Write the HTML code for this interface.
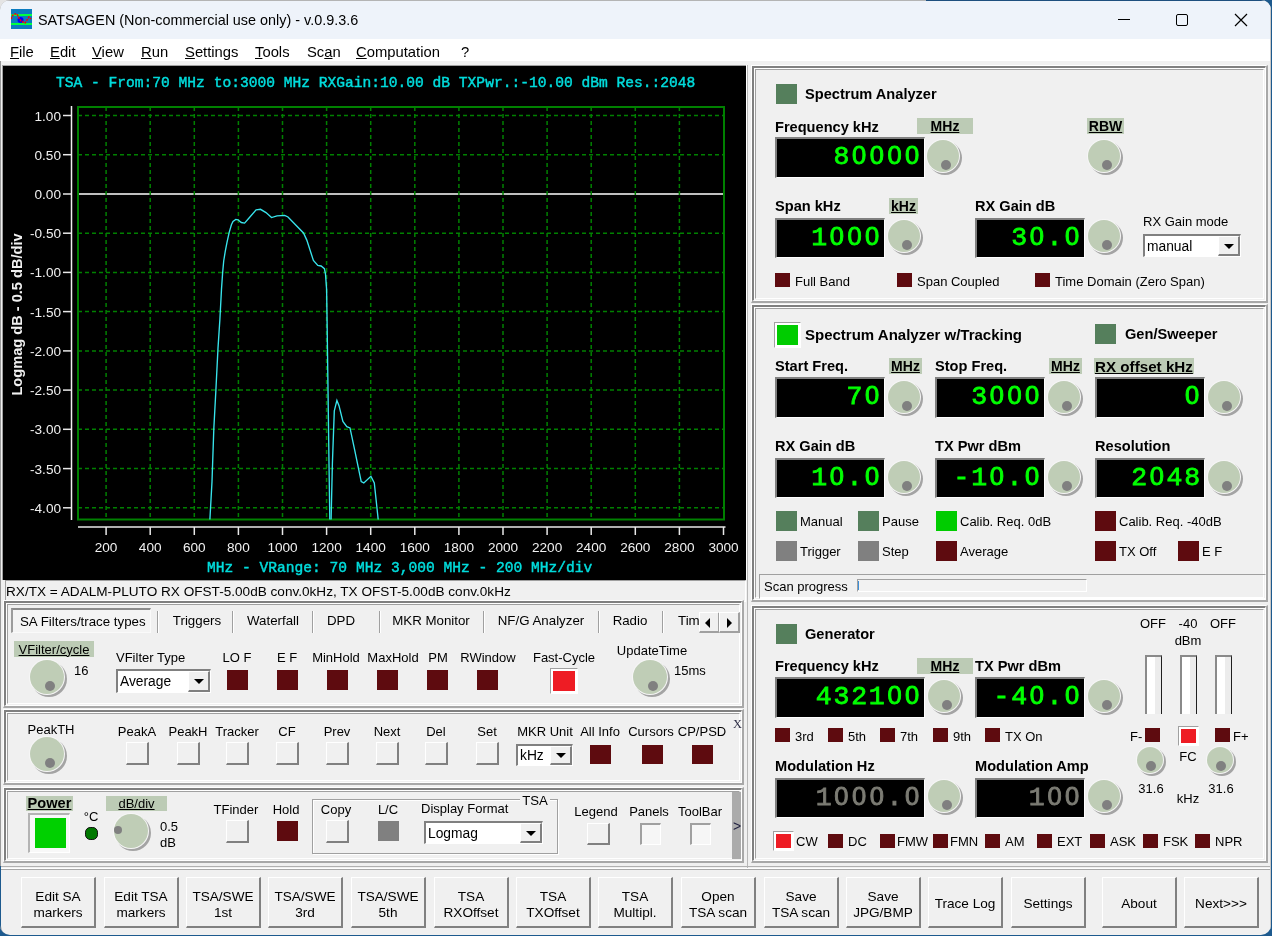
<!DOCTYPE html><html><head><meta charset="utf-8"><style>
html,body{margin:0;padding:0;width:1272px;height:936px;overflow:hidden;background:#1d5a8e}
#win{position:absolute;left:0;top:0;will-change:transform;width:1271px;height:935px;background:#f0f0f0;border-radius:10px;overflow:hidden;box-shadow:inset 1px 1px 0 #9a9a9a}
</style></head><body><div style="position:absolute;left:0;top:0;width:14px;height:14px;background:#e4e4e4"></div><div id="win"><div style="position:absolute;left:0px;top:0px;width:1271px;height:39px;background:#eef3fa"></div>
<svg style="position:absolute;left:11px;top:9px" width="21" height="21" viewBox="0 0 21 21"><rect x="0" y="0" width="21" height="20" fill="#0a7bc0"/><rect x="0" y="5" width="21" height="2" fill="#00ff40"/><rect x="0" y="14" width="21" height="2" fill="#00ff40"/><circle cx="9.5" cy="11" r="3" fill="#0000ff"/><polyline points="0,10 2,6 4,5 6,5 8,9 10,12 12,13 14,14 16,11 18,8 20,10" fill="none" stroke="#ff0000" stroke-width="1.5" stroke-dasharray="2,1"/></svg>
<div style="position:absolute;left:38px;top:11.5px;height:17px;line-height:17px;font:normal 14.4px 'Liberation Sans',sans-serif;color:#000;white-space:pre;">SATSAGEN (Non-commercial use only) - v.0.9.3.6</div>
<div style="position:absolute;left:1118px;top:19px;width:12px;height:1px;background:#000"></div>
<div style="position:absolute;left:1176px;top:14px;width:12px;height:12px;box-sizing:border-box;border:1.3px solid #000;border-radius:2px"></div>
<svg style="position:absolute;left:1234px;top:13px" width="14" height="14" viewBox="0 0 14 14"><path d="M1 1 L13 13 M13 1 L1 13" stroke="#000" stroke-width="1.2"/></svg>
<div style="position:absolute;left:0px;top:39px;width:1271px;height:22px;background:#fff"></div>
<div style="position:absolute;left:10px;top:43.5px;height:18px;line-height:18px;font:normal 14.8px 'Liberation Sans',sans-serif;color:#000;white-space:pre;"><u>F</u>ile</div>
<div style="position:absolute;left:50px;top:43.5px;height:18px;line-height:18px;font:normal 14.8px 'Liberation Sans',sans-serif;color:#000;white-space:pre;"><u>E</u>dit</div>
<div style="position:absolute;left:92px;top:43.5px;height:18px;line-height:18px;font:normal 14.8px 'Liberation Sans',sans-serif;color:#000;white-space:pre;"><u>V</u>iew</div>
<div style="position:absolute;left:141px;top:43.5px;height:18px;line-height:18px;font:normal 14.8px 'Liberation Sans',sans-serif;color:#000;white-space:pre;"><u>R</u>un</div>
<div style="position:absolute;left:185px;top:43.5px;height:18px;line-height:18px;font:normal 14.8px 'Liberation Sans',sans-serif;color:#000;white-space:pre;"><u>S</u>ettings</div>
<div style="position:absolute;left:255px;top:43.5px;height:18px;line-height:18px;font:normal 14.8px 'Liberation Sans',sans-serif;color:#000;white-space:pre;"><u>T</u>ools</div>
<div style="position:absolute;left:307px;top:43.5px;height:18px;line-height:18px;font:normal 14.8px 'Liberation Sans',sans-serif;color:#000;white-space:pre;">Sc<u>a</u>n</div>
<div style="position:absolute;left:356px;top:43.5px;height:18px;line-height:18px;font:normal 14.8px 'Liberation Sans',sans-serif;color:#000;white-space:pre;"><u>C</u>omputation</div>
<div style="position:absolute;left:461px;top:43.5px;height:18px;line-height:18px;font:normal 14.8px 'Liberation Sans',sans-serif;color:#000;white-space:pre;">?</div>
<div style="position:absolute;left:2px;top:65px;width:744px;height:1px;background:#a0a0a0"></div>
<div style="position:absolute;left:2px;top:65px;width:1px;height:515px;background:#a0a0a0"></div>
<svg style="position:absolute;left:3px;top:66px" width="743" height="514" viewBox="3 66 743 514"><rect x="3" y="66" width="743" height="514" fill="#000"/><text x="56" y="87" fill="#00dcdc" font-family="Liberation Mono" font-weight="normal" stroke="#00dcdc" stroke-width="0.45" font-size="14.6">TSA - From:70 MHz to:3000 MHz RXGain:10.00 dB TXPwr.:-10.00 dBm Res.:2048</text><line x1="63" y1="115.5" x2="71" y2="115.5" stroke="#e8e8e8" stroke-width="1.5"/><text x="61" y="120.5" text-anchor="end" fill="#f0f0f0" font-family="Liberation Sans" font-size="13.6">1.00</text><line x1="78" y1="115.5" x2="724" y2="115.5" stroke="#008000" stroke-width="1.5" stroke-dasharray="4,3"/><line x1="63" y1="154.7" x2="71" y2="154.7" stroke="#e8e8e8" stroke-width="1.5"/><text x="61" y="159.7" text-anchor="end" fill="#f0f0f0" font-family="Liberation Sans" font-size="13.6">0.50</text><line x1="78" y1="154.7" x2="724" y2="154.7" stroke="#008000" stroke-width="1.5" stroke-dasharray="4,3"/><line x1="63" y1="194.0" x2="71" y2="194.0" stroke="#e8e8e8" stroke-width="1.5"/><text x="61" y="199.0" text-anchor="end" fill="#f0f0f0" font-family="Liberation Sans" font-size="13.6">0.00</text><line x1="78" y1="194.0" x2="724" y2="194.0" stroke="#ffffff" stroke-width="1.5"/><line x1="63" y1="233.2" x2="71" y2="233.2" stroke="#e8e8e8" stroke-width="1.5"/><text x="61" y="238.2" text-anchor="end" fill="#f0f0f0" font-family="Liberation Sans" font-size="13.6">-0.50</text><line x1="78" y1="233.2" x2="724" y2="233.2" stroke="#008000" stroke-width="1.5" stroke-dasharray="4,3"/><line x1="63" y1="272.4" x2="71" y2="272.4" stroke="#e8e8e8" stroke-width="1.5"/><text x="61" y="277.4" text-anchor="end" fill="#f0f0f0" font-family="Liberation Sans" font-size="13.6">-1.00</text><line x1="78" y1="272.4" x2="724" y2="272.4" stroke="#008000" stroke-width="1.5" stroke-dasharray="4,3"/><line x1="63" y1="311.6" x2="71" y2="311.6" stroke="#e8e8e8" stroke-width="1.5"/><text x="61" y="316.6" text-anchor="end" fill="#f0f0f0" font-family="Liberation Sans" font-size="13.6">-1.50</text><line x1="78" y1="311.6" x2="724" y2="311.6" stroke="#008000" stroke-width="1.5" stroke-dasharray="4,3"/><line x1="63" y1="350.9" x2="71" y2="350.9" stroke="#e8e8e8" stroke-width="1.5"/><text x="61" y="355.9" text-anchor="end" fill="#f0f0f0" font-family="Liberation Sans" font-size="13.6">-2.00</text><line x1="78" y1="350.9" x2="724" y2="350.9" stroke="#008000" stroke-width="1.5" stroke-dasharray="4,3"/><line x1="63" y1="390.1" x2="71" y2="390.1" stroke="#e8e8e8" stroke-width="1.5"/><text x="61" y="395.1" text-anchor="end" fill="#f0f0f0" font-family="Liberation Sans" font-size="13.6">-2.50</text><line x1="78" y1="390.1" x2="724" y2="390.1" stroke="#008000" stroke-width="1.5" stroke-dasharray="4,3"/><line x1="63" y1="429.3" x2="71" y2="429.3" stroke="#e8e8e8" stroke-width="1.5"/><text x="61" y="434.3" text-anchor="end" fill="#f0f0f0" font-family="Liberation Sans" font-size="13.6">-3.00</text><line x1="78" y1="429.3" x2="724" y2="429.3" stroke="#008000" stroke-width="1.5" stroke-dasharray="4,3"/><line x1="63" y1="468.6" x2="71" y2="468.6" stroke="#e8e8e8" stroke-width="1.5"/><text x="61" y="473.6" text-anchor="end" fill="#f0f0f0" font-family="Liberation Sans" font-size="13.6">-3.50</text><line x1="78" y1="468.6" x2="724" y2="468.6" stroke="#008000" stroke-width="1.5" stroke-dasharray="4,3"/><line x1="63" y1="507.8" x2="71" y2="507.8" stroke="#e8e8e8" stroke-width="1.5"/><text x="61" y="512.8" text-anchor="end" fill="#f0f0f0" font-family="Liberation Sans" font-size="13.6">-4.00</text><line x1="78" y1="507.8" x2="724" y2="507.8" stroke="#008000" stroke-width="1.5" stroke-dasharray="4,3"/><line x1="71.5" y1="106" x2="71.5" y2="520" stroke="#f0f0f0" stroke-width="1.5"/><line x1="106.1" y1="107" x2="106.1" y2="519.5" stroke="#008000" stroke-width="1.5" stroke-dasharray="4,3"/><line x1="106.1" y1="527" x2="106.1" y2="535" stroke="#e8e8e8" stroke-width="1.5"/><text x="106.1" y="552" text-anchor="middle" fill="#f0f0f0" font-family="Liberation Sans" font-size="13.6">200</text><line x1="150.2" y1="107" x2="150.2" y2="519.5" stroke="#008000" stroke-width="1.5" stroke-dasharray="4,3"/><line x1="150.2" y1="527" x2="150.2" y2="535" stroke="#e8e8e8" stroke-width="1.5"/><text x="150.2" y="552" text-anchor="middle" fill="#f0f0f0" font-family="Liberation Sans" font-size="13.6">400</text><line x1="194.3" y1="107" x2="194.3" y2="519.5" stroke="#008000" stroke-width="1.5" stroke-dasharray="4,3"/><line x1="194.3" y1="527" x2="194.3" y2="535" stroke="#e8e8e8" stroke-width="1.5"/><text x="194.3" y="552" text-anchor="middle" fill="#f0f0f0" font-family="Liberation Sans" font-size="13.6">600</text><line x1="238.4" y1="107" x2="238.4" y2="519.5" stroke="#008000" stroke-width="1.5" stroke-dasharray="4,3"/><line x1="238.4" y1="527" x2="238.4" y2="535" stroke="#e8e8e8" stroke-width="1.5"/><text x="238.4" y="552" text-anchor="middle" fill="#f0f0f0" font-family="Liberation Sans" font-size="13.6">800</text><line x1="282.5" y1="107" x2="282.5" y2="519.5" stroke="#008000" stroke-width="1.5" stroke-dasharray="4,3"/><line x1="282.5" y1="527" x2="282.5" y2="535" stroke="#e8e8e8" stroke-width="1.5"/><text x="282.5" y="552" text-anchor="middle" fill="#f0f0f0" font-family="Liberation Sans" font-size="13.6">1000</text><line x1="326.6" y1="107" x2="326.6" y2="519.5" stroke="#008000" stroke-width="1.5" stroke-dasharray="4,3"/><line x1="326.6" y1="527" x2="326.6" y2="535" stroke="#e8e8e8" stroke-width="1.5"/><text x="326.6" y="552" text-anchor="middle" fill="#f0f0f0" font-family="Liberation Sans" font-size="13.6">1200</text><line x1="370.7" y1="107" x2="370.7" y2="519.5" stroke="#008000" stroke-width="1.5" stroke-dasharray="4,3"/><line x1="370.7" y1="527" x2="370.7" y2="535" stroke="#e8e8e8" stroke-width="1.5"/><text x="370.7" y="552" text-anchor="middle" fill="#f0f0f0" font-family="Liberation Sans" font-size="13.6">1400</text><line x1="414.8" y1="107" x2="414.8" y2="519.5" stroke="#008000" stroke-width="1.5" stroke-dasharray="4,3"/><line x1="414.8" y1="527" x2="414.8" y2="535" stroke="#e8e8e8" stroke-width="1.5"/><text x="414.8" y="552" text-anchor="middle" fill="#f0f0f0" font-family="Liberation Sans" font-size="13.6">1600</text><line x1="458.9" y1="107" x2="458.9" y2="519.5" stroke="#008000" stroke-width="1.5" stroke-dasharray="4,3"/><line x1="458.9" y1="527" x2="458.9" y2="535" stroke="#e8e8e8" stroke-width="1.5"/><text x="458.9" y="552" text-anchor="middle" fill="#f0f0f0" font-family="Liberation Sans" font-size="13.6">1800</text><line x1="503.0" y1="107" x2="503.0" y2="519.5" stroke="#008000" stroke-width="1.5" stroke-dasharray="4,3"/><line x1="503.0" y1="527" x2="503.0" y2="535" stroke="#e8e8e8" stroke-width="1.5"/><text x="503.0" y="552" text-anchor="middle" fill="#f0f0f0" font-family="Liberation Sans" font-size="13.6">2000</text><line x1="547.1" y1="107" x2="547.1" y2="519.5" stroke="#008000" stroke-width="1.5" stroke-dasharray="4,3"/><line x1="547.1" y1="527" x2="547.1" y2="535" stroke="#e8e8e8" stroke-width="1.5"/><text x="547.1" y="552" text-anchor="middle" fill="#f0f0f0" font-family="Liberation Sans" font-size="13.6">2200</text><line x1="591.2" y1="107" x2="591.2" y2="519.5" stroke="#008000" stroke-width="1.5" stroke-dasharray="4,3"/><line x1="591.2" y1="527" x2="591.2" y2="535" stroke="#e8e8e8" stroke-width="1.5"/><text x="591.2" y="552" text-anchor="middle" fill="#f0f0f0" font-family="Liberation Sans" font-size="13.6">2400</text><line x1="635.3" y1="107" x2="635.3" y2="519.5" stroke="#008000" stroke-width="1.5" stroke-dasharray="4,3"/><line x1="635.3" y1="527" x2="635.3" y2="535" stroke="#e8e8e8" stroke-width="1.5"/><text x="635.3" y="552" text-anchor="middle" fill="#f0f0f0" font-family="Liberation Sans" font-size="13.6">2600</text><line x1="679.4" y1="107" x2="679.4" y2="519.5" stroke="#008000" stroke-width="1.5" stroke-dasharray="4,3"/><line x1="679.4" y1="527" x2="679.4" y2="535" stroke="#e8e8e8" stroke-width="1.5"/><text x="679.4" y="552" text-anchor="middle" fill="#f0f0f0" font-family="Liberation Sans" font-size="13.6">2800</text><line x1="723.5" y1="527" x2="723.5" y2="535" stroke="#e8e8e8" stroke-width="1.5"/><text x="723.5" y="552" text-anchor="middle" fill="#f0f0f0" font-family="Liberation Sans" font-size="13.6">3000</text><rect x="78" y="107" width="646" height="412.5" fill="none" stroke="#008000" stroke-width="2"/><line x1="78" y1="527" x2="725.5" y2="527" stroke="#e8e8e8" stroke-width="1.5"/><polyline fill="none" stroke="#38e4ec" stroke-width="1.35" points="209.9,519.5 212,481.6 213.8,429.2 215.9,390 218,348.1 219.9,319.3 221.5,289.1 222.6,273.1 223.7,261 225.3,251.1 227,242.3 229.2,232.4 231.4,224.7 233,221.4 235.8,219.4 238,219.8 241.3,222.5 244.6,223.1 248.4,218.7 256.1,209.9 260.5,209.3 266,212.6 271.5,217.6 277,215.9 284.7,215.4 288,217 303.5,233 306.8,240.1 313.4,260.5 317.8,265.4 321.1,266 324.4,268.7 325.5,274.2 326.6,289.1 327.2,329.7 329,463.2 329.8,519.5"/><polyline fill="none" stroke="#38e4ec" stroke-width="1.35" points="331.1,519.5 332.4,463.2 334.3,410.9 336.9,400.4 339,405.7 342.9,421.4 346.8,426.6 350,427.9 354.7,450.2 361.2,481.6 363.8,482.9 370.9,476.3 374.3,482.9 378.2,519.5"/><text x="207" y="572" fill="#00dcdc" font-family="Liberation Mono" font-weight="normal" stroke="#00dcdc" stroke-width="0.45" font-size="14.6">MHz - VRange: 70 MHz 3,000 MHz - 200 MHz/div</text><text transform="translate(22,314.5) rotate(-90)" text-anchor="middle" fill="#f0f0f0" font-family="Liberation Sans" font-weight="bold" font-size="14.6">Logmag dB - 0.5 dB/div</text></svg>
<div style="position:absolute;left:5px;top:580px;width:741px;height:22px;box-sizing:border-box;border-top:1px solid #a0a0a0;border-left:1px solid #a0a0a0;border-bottom:1px solid #fff;border-right:1px solid #fff;background:#f0f0f0"></div>
<div style="position:absolute;left:6px;top:583.5px;height:16px;line-height:16px;font:normal 13.6px 'Liberation Sans',sans-serif;color:#000;white-space:pre;">RX/TX = ADALM-PLUTO RX OFST-5.00dB conv.0kHz, TX OFST-5.00dB conv.0kHz</div>
<div style="position:absolute;left:746px;top:61px;width:6px;height:810px;background:#f0f0f0"></div>
<div style="position:absolute;left:746px;top:65px;width:1px;height:515px;background:#fff"></div>
<div style="position:absolute;left:747px;top:65px;width:1px;height:805px;background:#b8b8b8"></div>
<div style="position:absolute;left:751px;top:65px;width:517px;height:238px;box-sizing:border-box;border-top:1px solid #fff;border-left:1px solid #fff;border-right:2px solid #a8a8a8;border-bottom:2px solid #a8a8a8"></div>
<div style="position:absolute;left:752px;top:66px;width:514px;height:235px;box-sizing:border-box;border-top:2px solid #808080;border-left:2px solid #808080;border-right:1px solid #fff;border-bottom:1px solid #fff"></div>
<div style="position:absolute;left:754px;top:68px;width:511px;height:232px;box-sizing:border-box;border-top:1px solid #fff;border-left:1px solid #fff;border-right:0;border-bottom:0"></div>
<div style="position:absolute;left:755px;top:69px;width:509px;height:230px;box-sizing:border-box;border-top:1px solid #a0a0a0;border-left:1px solid #a0a0a0;border-right:1px solid #fff;border-bottom:1px solid #fff"></div>
<div style="position:absolute;left:776px;top:84px;width:21px;height:20px;background:#557f5c"></div>
<div style="position:absolute;left:805px;top:85.5px;height:18px;line-height:18px;font:bold 14.6px 'Liberation Sans',sans-serif;color:#000;white-space:pre;">Spectrum Analyzer</div>
<div style="position:absolute;left:775px;top:118.5px;height:18px;line-height:18px;font:bold 14.6px 'Liberation Sans',sans-serif;color:#000;white-space:pre;">Frequency kHz</div>
<div style="position:absolute;left:917px;top:118px;width:56px;height:16px;background:#bccbb5"></div>
<div style="position:absolute;left:795.0px;width:300px;text-align:center;top:118.0px;height:17px;line-height:17px;font:bold 14px 'Liberation Sans',sans-serif;color:#000;white-space:pre;text-decoration:underline">MHz</div>
<div style="position:absolute;left:775px;top:137px;width:150px;height:41px;background:#000;border-top:2px solid #808080;border-left:2px solid #808080;border-bottom:1px solid #fff;border-right:1px solid #fff;box-sizing:border-box"></div>
<div style="position:absolute;left:775px;top:141px;width:146px;height:41px;line-height:41px;text-align:right;font:normal 26.5px 'Liberation Mono',monospace;-webkit-text-stroke:0.8px #00ff00;color:#00ff00;white-space:pre"><span style="display:inline-block;width:17.7px;text-align:center">8</span><span style="display:inline-block;width:17.7px;text-align:center;font:normal 25.5px 'Liberation Sans',sans-serif;-webkit-text-stroke:0.9px #00ff00">0</span><span style="display:inline-block;width:17.7px;text-align:center;font:normal 25.5px 'Liberation Sans',sans-serif;-webkit-text-stroke:0.9px #00ff00">0</span><span style="display:inline-block;width:17.7px;text-align:center;font:normal 25.5px 'Liberation Sans',sans-serif;-webkit-text-stroke:0.9px #00ff00">0</span><span style="display:inline-block;width:17.7px;text-align:center;font:normal 25.5px 'Liberation Sans',sans-serif;-webkit-text-stroke:0.9px #00ff00">0</span></div>
<div style="position:absolute;left:927.4px;top:140.4px;width:32px;height:32px;border-radius:50%;background:#bfcdb6;box-shadow:0 0 0 1px #f6f6f6, 2px 2px 0 1px #a4a4a4"></div>
<div style="position:absolute;left:941.4px;top:160.4px;width:10px;height:10px;border-radius:50%;background:#808080"></div>
<div style="position:absolute;left:1087px;top:118px;width:37px;height:16px;background:#bccbb5"></div>
<div style="position:absolute;left:955.5px;width:300px;text-align:center;top:118.0px;height:17px;line-height:17px;font:bold 14px 'Liberation Sans',sans-serif;color:#000;white-space:pre;text-decoration:underline">RBW</div>
<div style="position:absolute;left:1088.4px;top:140.4px;width:32px;height:32px;border-radius:50%;background:#bfcdb6;box-shadow:0 0 0 1px #f6f6f6, 2px 2px 0 1px #a4a4a4"></div>
<div style="position:absolute;left:1102.4px;top:160.4px;width:10px;height:10px;border-radius:50%;background:#808080"></div>
<div style="position:absolute;left:775px;top:197.5px;height:18px;line-height:18px;font:bold 14.6px 'Liberation Sans',sans-serif;color:#000;white-space:pre;">Span kHz</div>
<div style="position:absolute;left:889px;top:198px;width:29px;height:16px;background:#bccbb5"></div>
<div style="position:absolute;left:753.5px;width:300px;text-align:center;top:198.0px;height:17px;line-height:17px;font:bold 14px 'Liberation Sans',sans-serif;color:#000;white-space:pre;text-decoration:underline">kHz</div>
<div style="position:absolute;left:775px;top:218px;width:110px;height:40px;background:#000;border-top:2px solid #808080;border-left:2px solid #808080;border-bottom:1px solid #fff;border-right:1px solid #fff;box-sizing:border-box"></div>
<div style="position:absolute;left:775px;top:222px;width:106px;height:40px;line-height:40px;text-align:right;font:normal 26.5px 'Liberation Mono',monospace;-webkit-text-stroke:0.8px #00ff00;color:#00ff00;white-space:pre"><span style="display:inline-block;width:17.7px;text-align:center">1</span><span style="display:inline-block;width:17.7px;text-align:center;font:normal 25.5px 'Liberation Sans',sans-serif;-webkit-text-stroke:0.9px #00ff00">0</span><span style="display:inline-block;width:17.7px;text-align:center;font:normal 25.5px 'Liberation Sans',sans-serif;-webkit-text-stroke:0.9px #00ff00">0</span><span style="display:inline-block;width:17.7px;text-align:center;font:normal 25.5px 'Liberation Sans',sans-serif;-webkit-text-stroke:0.9px #00ff00">0</span></div>
<div style="position:absolute;left:888.4px;top:220.4px;width:32px;height:32px;border-radius:50%;background:#bfcdb6;box-shadow:0 0 0 1px #f6f6f6, 2px 2px 0 1px #a4a4a4"></div>
<div style="position:absolute;left:902.4px;top:240.4px;width:10px;height:10px;border-radius:50%;background:#808080"></div>
<div style="position:absolute;left:975px;top:197.5px;height:18px;line-height:18px;font:bold 14.6px 'Liberation Sans',sans-serif;color:#000;white-space:pre;">RX Gain dB</div>
<div style="position:absolute;left:975px;top:218px;width:110px;height:40px;background:#000;border-top:2px solid #808080;border-left:2px solid #808080;border-bottom:1px solid #fff;border-right:1px solid #fff;box-sizing:border-box"></div>
<div style="position:absolute;left:975px;top:222px;width:106px;height:40px;line-height:40px;text-align:right;font:normal 26.5px 'Liberation Mono',monospace;-webkit-text-stroke:0.8px #00ff00;color:#00ff00;white-space:pre"><span style="display:inline-block;width:17.7px;text-align:center">3</span><span style="display:inline-block;width:17.7px;text-align:center;font:normal 25.5px 'Liberation Sans',sans-serif;-webkit-text-stroke:0.9px #00ff00">0</span><span style="display:inline-block;width:17.7px;text-align:center">.</span><span style="display:inline-block;width:17.7px;text-align:center;font:normal 25.5px 'Liberation Sans',sans-serif;-webkit-text-stroke:0.9px #00ff00">0</span></div>
<div style="position:absolute;left:1088.4px;top:220.4px;width:32px;height:32px;border-radius:50%;background:#bfcdb6;box-shadow:0 0 0 1px #f6f6f6, 2px 2px 0 1px #a4a4a4"></div>
<div style="position:absolute;left:1102.4px;top:240.4px;width:10px;height:10px;border-radius:50%;background:#808080"></div>
<div style="position:absolute;left:1143px;top:214.0px;height:16px;line-height:16px;font:normal 13px 'Liberation Sans',sans-serif;color:#000;white-space:pre;">RX Gain mode</div>
<div style="position:absolute;left:1143px;top:234px;width:98px;height:23px;box-sizing:border-box;border-top:2px solid #808080;border-left:2px solid #808080;border-bottom:1px solid #fff;border-right:1px solid #fff;background:#fff"></div>
<div style="position:absolute;left:1147px;top:238.5px;height:17px;line-height:17px;font:normal 13.8px 'Liberation Sans',sans-serif;color:#000;white-space:pre;">manual</div>
<div style="position:absolute;left:1218px;top:236px;width:22px;height:20px;box-sizing:border-box;border-top:1px solid #fff;border-left:1px solid #fff;border-right:2px solid #808080;border-bottom:2px solid #808080;background:#f0f0f0"></div>
<div style="position:absolute;left:1224px;top:243.5px;width:0;height:0;border-left:5px solid transparent;border-right:5px solid transparent;border-top:5px solid #000"></div>
<div style="position:absolute;left:775px;top:273px;width:15px;height:14px;background:#5e0b0f"></div>
<div style="position:absolute;left:795px;top:273.5px;height:16px;line-height:16px;font:normal 13px 'Liberation Sans',sans-serif;color:#000;white-space:pre;">Full Band</div>
<div style="position:absolute;left:897px;top:273px;width:15px;height:14px;background:#5e0b0f"></div>
<div style="position:absolute;left:917px;top:273.5px;height:16px;line-height:16px;font:normal 13px 'Liberation Sans',sans-serif;color:#000;white-space:pre;">Span Coupled</div>
<div style="position:absolute;left:1035px;top:273px;width:15px;height:14px;background:#5e0b0f"></div>
<div style="position:absolute;left:1055px;top:273.5px;height:16px;line-height:16px;font:normal 13px 'Liberation Sans',sans-serif;color:#000;white-space:pre;">Time Domain (Zero Span)</div>
<div style="position:absolute;left:751px;top:304px;width:517px;height:298px;box-sizing:border-box;border-top:1px solid #fff;border-left:1px solid #fff;border-right:2px solid #a8a8a8;border-bottom:2px solid #a8a8a8"></div>
<div style="position:absolute;left:752px;top:305px;width:514px;height:295px;box-sizing:border-box;border-top:2px solid #808080;border-left:2px solid #808080;border-right:1px solid #fff;border-bottom:1px solid #fff"></div>
<div style="position:absolute;left:754px;top:307px;width:511px;height:292px;box-sizing:border-box;border-top:1px solid #fff;border-left:1px solid #fff;border-right:0;border-bottom:0"></div>
<div style="position:absolute;left:755px;top:308px;width:509px;height:290px;box-sizing:border-box;border-top:1px solid #a0a0a0;border-left:1px solid #a0a0a0;border-right:1px solid #fff;border-bottom:1px solid #fff"></div>
<div style="position:absolute;left:774px;top:322px;width:25px;height:24px;border-top:1px solid #a0a0a0;border-left:1px solid #a0a0a0;border-bottom:1px solid #fff;border-right:1px solid #fff;background:#fff"></div>
<div style="position:absolute;left:777px;top:325px;width:21px;height:20px;background:#00cc00"></div>
<div style="position:absolute;left:805px;top:325.5px;height:18px;line-height:18px;font:bold 15px 'Liberation Sans',sans-serif;color:#000;white-space:pre;">Spectrum Analyzer w/Tracking</div>
<div style="position:absolute;left:1095px;top:324px;width:21px;height:20px;background:#557f5c"></div>
<div style="position:absolute;left:1125px;top:325.5px;height:18px;line-height:18px;font:bold 14.6px 'Liberation Sans',sans-serif;color:#000;white-space:pre;">Gen/Sweeper</div>
<div style="position:absolute;left:775px;top:357.5px;height:18px;line-height:18px;font:bold 14.6px 'Liberation Sans',sans-serif;color:#000;white-space:pre;">Start Freq.</div>
<div style="position:absolute;left:889px;top:358px;width:33px;height:16px;background:#bccbb5"></div>
<div style="position:absolute;left:755.5px;width:300px;text-align:center;top:358.0px;height:17px;line-height:17px;font:bold 14px 'Liberation Sans',sans-serif;color:#000;white-space:pre;text-decoration:underline">MHz</div>
<div style="position:absolute;left:775px;top:377px;width:110px;height:41px;background:#000;border-top:2px solid #808080;border-left:2px solid #808080;border-bottom:1px solid #fff;border-right:1px solid #fff;box-sizing:border-box"></div>
<div style="position:absolute;left:775px;top:381px;width:106px;height:41px;line-height:41px;text-align:right;font:normal 26.5px 'Liberation Mono',monospace;-webkit-text-stroke:0.8px #00ff00;color:#00ff00;white-space:pre"><span style="display:inline-block;width:17.7px;text-align:center">7</span><span style="display:inline-block;width:17.7px;text-align:center;font:normal 25.5px 'Liberation Sans',sans-serif;-webkit-text-stroke:0.9px #00ff00">0</span></div>
<div style="position:absolute;left:888.4px;top:381.4px;width:32px;height:32px;border-radius:50%;background:#bfcdb6;box-shadow:0 0 0 1px #f6f6f6, 2px 2px 0 1px #a4a4a4"></div>
<div style="position:absolute;left:902.4px;top:401.4px;width:10px;height:10px;border-radius:50%;background:#808080"></div>
<div style="position:absolute;left:935px;top:357.5px;height:18px;line-height:18px;font:bold 14.6px 'Liberation Sans',sans-serif;color:#000;white-space:pre;">Stop Freq.</div>
<div style="position:absolute;left:1049px;top:358px;width:33px;height:16px;background:#bccbb5"></div>
<div style="position:absolute;left:915.5px;width:300px;text-align:center;top:358.0px;height:17px;line-height:17px;font:bold 14px 'Liberation Sans',sans-serif;color:#000;white-space:pre;text-decoration:underline">MHz</div>
<div style="position:absolute;left:935px;top:377px;width:110px;height:41px;background:#000;border-top:2px solid #808080;border-left:2px solid #808080;border-bottom:1px solid #fff;border-right:1px solid #fff;box-sizing:border-box"></div>
<div style="position:absolute;left:935px;top:381px;width:106px;height:41px;line-height:41px;text-align:right;font:normal 26.5px 'Liberation Mono',monospace;-webkit-text-stroke:0.8px #00ff00;color:#00ff00;white-space:pre"><span style="display:inline-block;width:17.7px;text-align:center">3</span><span style="display:inline-block;width:17.7px;text-align:center;font:normal 25.5px 'Liberation Sans',sans-serif;-webkit-text-stroke:0.9px #00ff00">0</span><span style="display:inline-block;width:17.7px;text-align:center;font:normal 25.5px 'Liberation Sans',sans-serif;-webkit-text-stroke:0.9px #00ff00">0</span><span style="display:inline-block;width:17.7px;text-align:center;font:normal 25.5px 'Liberation Sans',sans-serif;-webkit-text-stroke:0.9px #00ff00">0</span></div>
<div style="position:absolute;left:1048.4px;top:381.4px;width:32px;height:32px;border-radius:50%;background:#bfcdb6;box-shadow:0 0 0 1px #f6f6f6, 2px 2px 0 1px #a4a4a4"></div>
<div style="position:absolute;left:1062.4px;top:401.4px;width:10px;height:10px;border-radius:50%;background:#808080"></div>
<div style="position:absolute;left:1094px;top:358px;width:100px;height:16px;background:#bccbb5"></div>
<div style="position:absolute;left:1095px;top:357.5px;height:18px;line-height:18px;font:bold 15.2px 'Liberation Sans',sans-serif;color:#000;white-space:pre;text-decoration:underline">RX offset kHz</div>
<div style="position:absolute;left:1095px;top:377px;width:110px;height:41px;background:#000;border-top:2px solid #808080;border-left:2px solid #808080;border-bottom:1px solid #fff;border-right:1px solid #fff;box-sizing:border-box"></div>
<div style="position:absolute;left:1095px;top:381px;width:106px;height:41px;line-height:41px;text-align:right;font:normal 26.5px 'Liberation Mono',monospace;-webkit-text-stroke:0.8px #00ff00;color:#00ff00;white-space:pre"><span style="display:inline-block;width:17.7px;text-align:center;font:normal 25.5px 'Liberation Sans',sans-serif;-webkit-text-stroke:0.9px #00ff00">0</span></div>
<div style="position:absolute;left:1208.4px;top:381.4px;width:32px;height:32px;border-radius:50%;background:#bfcdb6;box-shadow:0 0 0 1px #f6f6f6, 2px 2px 0 1px #a4a4a4"></div>
<div style="position:absolute;left:1222.4px;top:401.4px;width:10px;height:10px;border-radius:50%;background:#808080"></div>
<div style="position:absolute;left:775px;top:437.5px;height:18px;line-height:18px;font:bold 14.6px 'Liberation Sans',sans-serif;color:#000;white-space:pre;">RX Gain dB</div>
<div style="position:absolute;left:775px;top:458px;width:110px;height:40px;background:#000;border-top:2px solid #808080;border-left:2px solid #808080;border-bottom:1px solid #fff;border-right:1px solid #fff;box-sizing:border-box"></div>
<div style="position:absolute;left:775px;top:462px;width:106px;height:40px;line-height:40px;text-align:right;font:normal 26.5px 'Liberation Mono',monospace;-webkit-text-stroke:0.8px #00ff00;color:#00ff00;white-space:pre"><span style="display:inline-block;width:17.7px;text-align:center">1</span><span style="display:inline-block;width:17.7px;text-align:center;font:normal 25.5px 'Liberation Sans',sans-serif;-webkit-text-stroke:0.9px #00ff00">0</span><span style="display:inline-block;width:17.7px;text-align:center">.</span><span style="display:inline-block;width:17.7px;text-align:center;font:normal 25.5px 'Liberation Sans',sans-serif;-webkit-text-stroke:0.9px #00ff00">0</span></div>
<div style="position:absolute;left:888.4px;top:461.4px;width:32px;height:32px;border-radius:50%;background:#bfcdb6;box-shadow:0 0 0 1px #f6f6f6, 2px 2px 0 1px #a4a4a4"></div>
<div style="position:absolute;left:902.4px;top:481.4px;width:10px;height:10px;border-radius:50%;background:#808080"></div>
<div style="position:absolute;left:935px;top:437.5px;height:18px;line-height:18px;font:bold 14.6px 'Liberation Sans',sans-serif;color:#000;white-space:pre;">TX Pwr dBm</div>
<div style="position:absolute;left:935px;top:458px;width:110px;height:40px;background:#000;border-top:2px solid #808080;border-left:2px solid #808080;border-bottom:1px solid #fff;border-right:1px solid #fff;box-sizing:border-box"></div>
<div style="position:absolute;left:935px;top:462px;width:106px;height:40px;line-height:40px;text-align:right;font:normal 26.5px 'Liberation Mono',monospace;-webkit-text-stroke:0.8px #00ff00;color:#00ff00;white-space:pre"><span style="display:inline-block;width:17.7px;text-align:center">-</span><span style="display:inline-block;width:17.7px;text-align:center">1</span><span style="display:inline-block;width:17.7px;text-align:center;font:normal 25.5px 'Liberation Sans',sans-serif;-webkit-text-stroke:0.9px #00ff00">0</span><span style="display:inline-block;width:17.7px;text-align:center">.</span><span style="display:inline-block;width:17.7px;text-align:center;font:normal 25.5px 'Liberation Sans',sans-serif;-webkit-text-stroke:0.9px #00ff00">0</span></div>
<div style="position:absolute;left:1048.4px;top:461.4px;width:32px;height:32px;border-radius:50%;background:#bfcdb6;box-shadow:0 0 0 1px #f6f6f6, 2px 2px 0 1px #a4a4a4"></div>
<div style="position:absolute;left:1062.4px;top:481.4px;width:10px;height:10px;border-radius:50%;background:#808080"></div>
<div style="position:absolute;left:1095px;top:437.5px;height:18px;line-height:18px;font:bold 14.6px 'Liberation Sans',sans-serif;color:#000;white-space:pre;">Resolution</div>
<div style="position:absolute;left:1095px;top:458px;width:110px;height:40px;background:#000;border-top:2px solid #808080;border-left:2px solid #808080;border-bottom:1px solid #fff;border-right:1px solid #fff;box-sizing:border-box"></div>
<div style="position:absolute;left:1095px;top:462px;width:106px;height:40px;line-height:40px;text-align:right;font:normal 26.5px 'Liberation Mono',monospace;-webkit-text-stroke:0.8px #00ff00;color:#00ff00;white-space:pre"><span style="display:inline-block;width:17.7px;text-align:center">2</span><span style="display:inline-block;width:17.7px;text-align:center;font:normal 25.5px 'Liberation Sans',sans-serif;-webkit-text-stroke:0.9px #00ff00">0</span><span style="display:inline-block;width:17.7px;text-align:center">4</span><span style="display:inline-block;width:17.7px;text-align:center">8</span></div>
<div style="position:absolute;left:1208.4px;top:461.4px;width:32px;height:32px;border-radius:50%;background:#bfcdb6;box-shadow:0 0 0 1px #f6f6f6, 2px 2px 0 1px #a4a4a4"></div>
<div style="position:absolute;left:1222.4px;top:481.4px;width:10px;height:10px;border-radius:50%;background:#808080"></div>
<div style="position:absolute;left:776px;top:511px;width:21px;height:20px;background:#557f5c"></div>
<div style="position:absolute;left:800px;top:513.5px;height:16px;line-height:16px;font:normal 13px 'Liberation Sans',sans-serif;color:#000;white-space:pre;">Manual</div>
<div style="position:absolute;left:858px;top:511px;width:21px;height:20px;background:#557f5c"></div>
<div style="position:absolute;left:882px;top:513.5px;height:16px;line-height:16px;font:normal 13px 'Liberation Sans',sans-serif;color:#000;white-space:pre;">Pause</div>
<div style="position:absolute;left:936px;top:511px;width:21px;height:20px;background:#00cc00"></div>
<div style="position:absolute;left:960px;top:513.5px;height:16px;line-height:16px;font:normal 13px 'Liberation Sans',sans-serif;color:#000;white-space:pre;">Calib. Req. 0dB</div>
<div style="position:absolute;left:1095px;top:511px;width:21px;height:20px;background:#5e0b0f"></div>
<div style="position:absolute;left:1119px;top:513.5px;height:16px;line-height:16px;font:normal 13px 'Liberation Sans',sans-serif;color:#000;white-space:pre;">Calib. Req. -40dB</div>
<div style="position:absolute;left:776px;top:541px;width:21px;height:20px;background:#808080"></div>
<div style="position:absolute;left:800px;top:543.5px;height:16px;line-height:16px;font:normal 13px 'Liberation Sans',sans-serif;color:#000;white-space:pre;">Trigger</div>
<div style="position:absolute;left:858px;top:541px;width:21px;height:20px;background:#808080"></div>
<div style="position:absolute;left:882px;top:543.5px;height:16px;line-height:16px;font:normal 13px 'Liberation Sans',sans-serif;color:#000;white-space:pre;">Step</div>
<div style="position:absolute;left:936px;top:541px;width:21px;height:20px;background:#5e0b0f"></div>
<div style="position:absolute;left:960px;top:543.5px;height:16px;line-height:16px;font:normal 13px 'Liberation Sans',sans-serif;color:#000;white-space:pre;">Average</div>
<div style="position:absolute;left:1095px;top:541px;width:21px;height:20px;background:#5e0b0f"></div>
<div style="position:absolute;left:1119px;top:543.5px;height:16px;line-height:16px;font:normal 13px 'Liberation Sans',sans-serif;color:#000;white-space:pre;">TX Off</div>
<div style="position:absolute;left:1178px;top:541px;width:21px;height:20px;background:#5e0b0f"></div>
<div style="position:absolute;left:1202px;top:543.5px;height:16px;line-height:16px;font:normal 13px 'Liberation Sans',sans-serif;color:#000;white-space:pre;">E F</div>
<div style="position:absolute;left:759px;top:574px;width:507px;height:25px;box-sizing:border-box;border-top:1px solid #a0a0a0;border-left:1px solid #a0a0a0;border-bottom:1px solid #fff;border-right:1px solid #fff"></div>
<div style="position:absolute;left:764px;top:579.0px;height:16px;line-height:16px;font:normal 13px 'Liberation Sans',sans-serif;color:#000;white-space:pre;">Scan progress</div>
<div style="position:absolute;left:857px;top:579px;width:230px;height:13px;box-sizing:border-box;border-top:1px solid #a0a0a0;border-left:1px solid #a0a0a0;border-bottom:1px solid #fff;border-right:1px solid #fff;background:#f2f2f2"></div>
<div style="position:absolute;left:858px;top:581px;width:1px;height:9px;background:#3c8fd8"></div>
<div style="position:absolute;left:751px;top:605px;width:517px;height:258px;box-sizing:border-box;border-top:1px solid #fff;border-left:1px solid #fff;border-right:2px solid #a8a8a8;border-bottom:2px solid #a8a8a8"></div>
<div style="position:absolute;left:752px;top:606px;width:514px;height:255px;box-sizing:border-box;border-top:2px solid #808080;border-left:2px solid #808080;border-right:1px solid #fff;border-bottom:1px solid #fff"></div>
<div style="position:absolute;left:754px;top:608px;width:511px;height:252px;box-sizing:border-box;border-top:1px solid #fff;border-left:1px solid #fff;border-right:0;border-bottom:0"></div>
<div style="position:absolute;left:755px;top:609px;width:509px;height:250px;box-sizing:border-box;border-top:1px solid #a0a0a0;border-left:1px solid #a0a0a0;border-right:1px solid #fff;border-bottom:1px solid #fff"></div>
<div style="position:absolute;left:776px;top:624px;width:21px;height:20px;background:#557f5c"></div>
<div style="position:absolute;left:805px;top:625.5px;height:18px;line-height:18px;font:bold 14.6px 'Liberation Sans',sans-serif;color:#000;white-space:pre;">Generator</div>
<div style="position:absolute;left:775px;top:657.5px;height:18px;line-height:18px;font:bold 14.6px 'Liberation Sans',sans-serif;color:#000;white-space:pre;">Frequency kHz</div>
<div style="position:absolute;left:917px;top:658px;width:56px;height:16px;background:#bccbb5"></div>
<div style="position:absolute;left:795.0px;width:300px;text-align:center;top:658.0px;height:17px;line-height:17px;font:bold 14px 'Liberation Sans',sans-serif;color:#000;white-space:pre;text-decoration:underline">MHz</div>
<div style="position:absolute;left:775px;top:677px;width:150px;height:41px;background:#000;border-top:2px solid #808080;border-left:2px solid #808080;border-bottom:1px solid #fff;border-right:1px solid #fff;box-sizing:border-box"></div>
<div style="position:absolute;left:775px;top:681px;width:146px;height:41px;line-height:41px;text-align:right;font:normal 26.5px 'Liberation Mono',monospace;-webkit-text-stroke:0.8px #00ff00;color:#00ff00;white-space:pre"><span style="display:inline-block;width:17.7px;text-align:center">4</span><span style="display:inline-block;width:17.7px;text-align:center">3</span><span style="display:inline-block;width:17.7px;text-align:center">2</span><span style="display:inline-block;width:17.7px;text-align:center">1</span><span style="display:inline-block;width:17.7px;text-align:center;font:normal 25.5px 'Liberation Sans',sans-serif;-webkit-text-stroke:0.9px #00ff00">0</span><span style="display:inline-block;width:17.7px;text-align:center;font:normal 25.5px 'Liberation Sans',sans-serif;-webkit-text-stroke:0.9px #00ff00">0</span></div>
<div style="position:absolute;left:928.4px;top:680.4px;width:32px;height:32px;border-radius:50%;background:#bfcdb6;box-shadow:0 0 0 1px #f6f6f6, 2px 2px 0 1px #a4a4a4"></div>
<div style="position:absolute;left:942.4px;top:700.4px;width:10px;height:10px;border-radius:50%;background:#808080"></div>
<div style="position:absolute;left:975px;top:657.5px;height:18px;line-height:18px;font:bold 14.6px 'Liberation Sans',sans-serif;color:#000;white-space:pre;">TX Pwr dBm</div>
<div style="position:absolute;left:975px;top:677px;width:110px;height:41px;background:#000;border-top:2px solid #808080;border-left:2px solid #808080;border-bottom:1px solid #fff;border-right:1px solid #fff;box-sizing:border-box"></div>
<div style="position:absolute;left:975px;top:681px;width:106px;height:41px;line-height:41px;text-align:right;font:normal 26.5px 'Liberation Mono',monospace;-webkit-text-stroke:0.8px #00ff00;color:#00ff00;white-space:pre"><span style="display:inline-block;width:17.7px;text-align:center">-</span><span style="display:inline-block;width:17.7px;text-align:center">4</span><span style="display:inline-block;width:17.7px;text-align:center;font:normal 25.5px 'Liberation Sans',sans-serif;-webkit-text-stroke:0.9px #00ff00">0</span><span style="display:inline-block;width:17.7px;text-align:center">.</span><span style="display:inline-block;width:17.7px;text-align:center;font:normal 25.5px 'Liberation Sans',sans-serif;-webkit-text-stroke:0.9px #00ff00">0</span></div>
<div style="position:absolute;left:1088.4px;top:680.4px;width:32px;height:32px;border-radius:50%;background:#bfcdb6;box-shadow:0 0 0 1px #f6f6f6, 2px 2px 0 1px #a4a4a4"></div>
<div style="position:absolute;left:1102.4px;top:700.4px;width:10px;height:10px;border-radius:50%;background:#808080"></div>
<div style="position:absolute;left:775px;top:728px;width:15px;height:14px;background:#5e0b0f"></div>
<div style="position:absolute;left:795px;top:728.5px;height:16px;line-height:16px;font:normal 13px 'Liberation Sans',sans-serif;color:#000;white-space:pre;">3rd</div>
<div style="position:absolute;left:828px;top:728px;width:15px;height:14px;background:#5e0b0f"></div>
<div style="position:absolute;left:848px;top:728.5px;height:16px;line-height:16px;font:normal 13px 'Liberation Sans',sans-serif;color:#000;white-space:pre;">5th</div>
<div style="position:absolute;left:880px;top:728px;width:15px;height:14px;background:#5e0b0f"></div>
<div style="position:absolute;left:900px;top:728.5px;height:16px;line-height:16px;font:normal 13px 'Liberation Sans',sans-serif;color:#000;white-space:pre;">7th</div>
<div style="position:absolute;left:933px;top:728px;width:15px;height:14px;background:#5e0b0f"></div>
<div style="position:absolute;left:953px;top:728.5px;height:16px;line-height:16px;font:normal 13px 'Liberation Sans',sans-serif;color:#000;white-space:pre;">9th</div>
<div style="position:absolute;left:985px;top:728px;width:15px;height:14px;background:#5e0b0f"></div>
<div style="position:absolute;left:1005px;top:728.5px;height:16px;line-height:16px;font:normal 13px 'Liberation Sans',sans-serif;color:#000;white-space:pre;">TX On</div>
<div style="position:absolute;left:775px;top:757.5px;height:18px;line-height:18px;font:bold 14.6px 'Liberation Sans',sans-serif;color:#000;white-space:pre;">Modulation Hz</div>
<div style="position:absolute;left:775px;top:778px;width:150px;height:40px;background:#000;border-top:2px solid #808080;border-left:2px solid #808080;border-bottom:1px solid #fff;border-right:1px solid #fff;box-sizing:border-box"></div>
<div style="position:absolute;left:775px;top:782px;width:146px;height:40px;line-height:40px;text-align:right;font:normal 26.5px 'Liberation Mono',monospace;-webkit-text-stroke:0.8px #7c7c74;color:#7c7c74;white-space:pre"><span style="display:inline-block;width:17.7px;text-align:center">1</span><span style="display:inline-block;width:17.7px;text-align:center;font:normal 25.5px 'Liberation Sans',sans-serif;-webkit-text-stroke:0.9px #7c7c74">0</span><span style="display:inline-block;width:17.7px;text-align:center;font:normal 25.5px 'Liberation Sans',sans-serif;-webkit-text-stroke:0.9px #7c7c74">0</span><span style="display:inline-block;width:17.7px;text-align:center;font:normal 25.5px 'Liberation Sans',sans-serif;-webkit-text-stroke:0.9px #7c7c74">0</span><span style="display:inline-block;width:17.7px;text-align:center">.</span><span style="display:inline-block;width:17.7px;text-align:center;font:normal 25.5px 'Liberation Sans',sans-serif;-webkit-text-stroke:0.9px #7c7c74">0</span></div>
<div style="position:absolute;left:928.4px;top:780.4px;width:32px;height:32px;border-radius:50%;background:#bfcdb6;box-shadow:0 0 0 1px #f6f6f6, 2px 2px 0 1px #a4a4a4"></div>
<div style="position:absolute;left:942.4px;top:800.4px;width:10px;height:10px;border-radius:50%;background:#808080"></div>
<div style="position:absolute;left:975px;top:757.5px;height:18px;line-height:18px;font:bold 14.6px 'Liberation Sans',sans-serif;color:#000;white-space:pre;">Modulation Amp</div>
<div style="position:absolute;left:975px;top:778px;width:110px;height:40px;background:#000;border-top:2px solid #808080;border-left:2px solid #808080;border-bottom:1px solid #fff;border-right:1px solid #fff;box-sizing:border-box"></div>
<div style="position:absolute;left:975px;top:782px;width:106px;height:40px;line-height:40px;text-align:right;font:normal 26.5px 'Liberation Mono',monospace;-webkit-text-stroke:0.8px #7c7c74;color:#7c7c74;white-space:pre"><span style="display:inline-block;width:17.7px;text-align:center">1</span><span style="display:inline-block;width:17.7px;text-align:center;font:normal 25.5px 'Liberation Sans',sans-serif;-webkit-text-stroke:0.9px #7c7c74">0</span><span style="display:inline-block;width:17.7px;text-align:center;font:normal 25.5px 'Liberation Sans',sans-serif;-webkit-text-stroke:0.9px #7c7c74">0</span></div>
<div style="position:absolute;left:1088.4px;top:780.4px;width:32px;height:32px;border-radius:50%;background:#bfcdb6;box-shadow:0 0 0 1px #f6f6f6, 2px 2px 0 1px #a4a4a4"></div>
<div style="position:absolute;left:1102.4px;top:800.4px;width:10px;height:10px;border-radius:50%;background:#808080"></div>
<div style="position:absolute;left:773px;top:831px;width:19px;height:18px;border-top:1px solid #a0a0a0;border-left:1px solid #a0a0a0;border-bottom:1px solid #fff;border-right:1px solid #fff;background:#fff"></div>
<div style="position:absolute;left:776px;top:834px;width:15px;height:14px;background:#ee1c24"></div>
<div style="position:absolute;left:796px;top:833.5px;height:16px;line-height:16px;font:normal 13px 'Liberation Sans',sans-serif;color:#000;white-space:pre;">CW</div>
<div style="position:absolute;left:828px;top:834px;width:15px;height:14px;background:#5e0b0f"></div>
<div style="position:absolute;left:848px;top:833.5px;height:16px;line-height:16px;font:normal 13px 'Liberation Sans',sans-serif;color:#000;white-space:pre;">DC</div>
<div style="position:absolute;left:880px;top:834px;width:15px;height:14px;background:#5e0b0f"></div>
<div style="position:absolute;left:897px;top:833.5px;height:16px;line-height:16px;font:normal 13px 'Liberation Sans',sans-serif;color:#000;white-space:pre;">FMW</div>
<div style="position:absolute;left:933px;top:834px;width:15px;height:14px;background:#5e0b0f"></div>
<div style="position:absolute;left:950px;top:833.5px;height:16px;line-height:16px;font:normal 13px 'Liberation Sans',sans-serif;color:#000;white-space:pre;">FMN</div>
<div style="position:absolute;left:985px;top:834px;width:15px;height:14px;background:#5e0b0f"></div>
<div style="position:absolute;left:1005px;top:833.5px;height:16px;line-height:16px;font:normal 13px 'Liberation Sans',sans-serif;color:#000;white-space:pre;">AM</div>
<div style="position:absolute;left:1037px;top:834px;width:15px;height:14px;background:#5e0b0f"></div>
<div style="position:absolute;left:1057px;top:833.5px;height:16px;line-height:16px;font:normal 13px 'Liberation Sans',sans-serif;color:#000;white-space:pre;">EXT</div>
<div style="position:absolute;left:1090px;top:834px;width:15px;height:14px;background:#5e0b0f"></div>
<div style="position:absolute;left:1110px;top:833.5px;height:16px;line-height:16px;font:normal 13px 'Liberation Sans',sans-serif;color:#000;white-space:pre;">ASK</div>
<div style="position:absolute;left:1143px;top:834px;width:15px;height:14px;background:#5e0b0f"></div>
<div style="position:absolute;left:1163px;top:833.5px;height:16px;line-height:16px;font:normal 13px 'Liberation Sans',sans-serif;color:#000;white-space:pre;">FSK</div>
<div style="position:absolute;left:1195px;top:834px;width:15px;height:14px;background:#5e0b0f"></div>
<div style="position:absolute;left:1215px;top:833.5px;height:16px;line-height:16px;font:normal 13px 'Liberation Sans',sans-serif;color:#000;white-space:pre;">NPR</div>
<div style="position:absolute;left:1003px;width:300px;text-align:center;top:615.5px;height:16px;line-height:16px;font:normal 13px 'Liberation Sans',sans-serif;color:#000;white-space:pre;">OFF</div>
<div style="position:absolute;left:1145px;top:655px;width:17px;height:59px;box-sizing:border-box;border-top:2px solid #8a8a8a;border-left:2px solid #8a8a8a;border-right:1px solid #202020;background:linear-gradient(to right,#fff 0,#fff 8px,#ececec 8px)"></div>
<div style="position:absolute;left:1038px;width:300px;text-align:center;top:615.5px;height:16px;line-height:16px;font:normal 13px 'Liberation Sans',sans-serif;color:#000;white-space:pre;">-40</div>
<div style="position:absolute;left:1180px;top:655px;width:17px;height:59px;box-sizing:border-box;border-top:2px solid #8a8a8a;border-left:2px solid #8a8a8a;border-right:1px solid #202020;background:linear-gradient(to right,#fff 0,#fff 8px,#ececec 8px)"></div>
<div style="position:absolute;left:1073px;width:300px;text-align:center;top:615.5px;height:16px;line-height:16px;font:normal 13px 'Liberation Sans',sans-serif;color:#000;white-space:pre;">OFF</div>
<div style="position:absolute;left:1215px;top:655px;width:17px;height:59px;box-sizing:border-box;border-top:2px solid #8a8a8a;border-left:2px solid #8a8a8a;border-right:1px solid #202020;background:linear-gradient(to right,#fff 0,#fff 8px,#ececec 8px)"></div>
<div style="position:absolute;left:1038px;width:300px;text-align:center;top:632.5px;height:16px;line-height:16px;font:normal 13px 'Liberation Sans',sans-serif;color:#000;white-space:pre;">dBm</div>
<div style="position:absolute;left:1130px;top:728.5px;height:16px;line-height:16px;font:normal 13px 'Liberation Sans',sans-serif;color:#000;white-space:pre;">F-</div>
<div style="position:absolute;left:1145px;top:728px;width:15px;height:14px;background:#5e0b0f"></div>
<div style="position:absolute;left:1178px;top:726px;width:19px;height:18px;border-top:1px solid #a0a0a0;border-left:1px solid #a0a0a0;border-bottom:1px solid #fff;border-right:1px solid #fff;background:#fff"></div>
<div style="position:absolute;left:1181px;top:729px;width:15px;height:14px;background:#ee1c24"></div>
<div style="position:absolute;left:1215px;top:728px;width:15px;height:14px;background:#5e0b0f"></div>
<div style="position:absolute;left:1233px;top:728.5px;height:16px;line-height:16px;font:normal 13px 'Liberation Sans',sans-serif;color:#000;white-space:pre;">F+</div>
<div style="position:absolute;left:1038px;width:300px;text-align:center;top:748.5px;height:16px;line-height:16px;font:normal 13px 'Liberation Sans',sans-serif;color:#000;white-space:pre;">FC</div>
<div style="position:absolute;left:1137.4px;top:747.4px;width:26px;height:26px;border-radius:50%;background:#bfcdb6;box-shadow:0 0 0 1px #f6f6f6, 2px 2px 0 1px #a4a4a4"></div>
<div style="position:absolute;left:1146.4px;top:761.4px;width:10px;height:10px;border-radius:50%;background:#808080"></div>
<div style="position:absolute;left:1207.4px;top:747.4px;width:26px;height:26px;border-radius:50%;background:#bfcdb6;box-shadow:0 0 0 1px #f6f6f6, 2px 2px 0 1px #a4a4a4"></div>
<div style="position:absolute;left:1216.4px;top:761.4px;width:10px;height:10px;border-radius:50%;background:#808080"></div>
<div style="position:absolute;left:1001px;width:300px;text-align:center;top:780.5px;height:16px;line-height:16px;font:normal 13px 'Liberation Sans',sans-serif;color:#000;white-space:pre;">31.6</div>
<div style="position:absolute;left:1038px;width:300px;text-align:center;top:790.5px;height:16px;line-height:16px;font:normal 13px 'Liberation Sans',sans-serif;color:#000;white-space:pre;">kHz</div>
<div style="position:absolute;left:1071px;width:300px;text-align:center;top:780.5px;height:16px;line-height:16px;font:normal 13px 'Liberation Sans',sans-serif;color:#000;white-space:pre;">31.6</div>
<div style="position:absolute;left:3px;top:600px;width:741px;height:108px;box-sizing:border-box;border-top:1px solid #fff;border-left:1px solid #fff;border-right:2px solid #a8a8a8;border-bottom:2px solid #a8a8a8"></div>
<div style="position:absolute;left:4px;top:601px;width:738px;height:105px;box-sizing:border-box;border-top:2px solid #808080;border-left:2px solid #808080;border-right:1px solid #fff;border-bottom:1px solid #fff"></div>
<div style="position:absolute;left:6px;top:603px;width:735px;height:102px;box-sizing:border-box;border-top:1px solid #fff;border-left:1px solid #fff;border-right:0;border-bottom:0"></div>
<div style="position:absolute;left:7px;top:604px;width:733px;height:100px;box-sizing:border-box;border-top:1px solid #a0a0a0;border-left:1px solid #a0a0a0;border-right:1px solid #fff;border-bottom:1px solid #fff"></div>
<div style="position:absolute;left:11px;top:608px;width:140px;height:25px;box-sizing:border-box;border-top:2px solid #8c8c8c;border-left:2px solid #9c9c9c;border-right:1px solid #fafafa;border-bottom:1px solid #fafafa;background:#f4f4f4"></div>
<div style="position:absolute;left:20px;top:614.0px;height:16px;line-height:16px;font:normal 13.3px 'Liberation Sans',sans-serif;color:#000;white-space:pre;">SA Filters/trace types</div>
<div style="position:absolute;left:47px;width:300px;text-align:center;top:613.0px;height:16px;line-height:16px;font:normal 13.3px 'Liberation Sans',sans-serif;color:#000;white-space:pre;">Triggers</div>
<div style="position:absolute;left:123px;width:300px;text-align:center;top:613.0px;height:16px;line-height:16px;font:normal 13.3px 'Liberation Sans',sans-serif;color:#000;white-space:pre;">Waterfall</div>
<div style="position:absolute;left:191px;width:300px;text-align:center;top:613.0px;height:16px;line-height:16px;font:normal 13.3px 'Liberation Sans',sans-serif;color:#000;white-space:pre;">DPD</div>
<div style="position:absolute;left:281px;width:300px;text-align:center;top:613.0px;height:16px;line-height:16px;font:normal 13.3px 'Liberation Sans',sans-serif;color:#000;white-space:pre;">MKR Monitor</div>
<div style="position:absolute;left:391px;width:300px;text-align:center;top:613.0px;height:16px;line-height:16px;font:normal 13.3px 'Liberation Sans',sans-serif;color:#000;white-space:pre;">NF/G Analyzer</div>
<div style="position:absolute;left:480px;width:300px;text-align:center;top:613.0px;height:16px;line-height:16px;font:normal 13.3px 'Liberation Sans',sans-serif;color:#000;white-space:pre;">Radio</div>
<div style="position:absolute;left:157px;top:611px;width:1px;height:22px;background:#a0a0a0"></div>
<div style="position:absolute;left:158px;top:611px;width:1px;height:22px;background:#fff"></div>
<div style="position:absolute;left:232px;top:611px;width:1px;height:22px;background:#a0a0a0"></div>
<div style="position:absolute;left:233px;top:611px;width:1px;height:22px;background:#fff"></div>
<div style="position:absolute;left:312px;top:611px;width:1px;height:22px;background:#a0a0a0"></div>
<div style="position:absolute;left:313px;top:611px;width:1px;height:22px;background:#fff"></div>
<div style="position:absolute;left:379px;top:611px;width:1px;height:22px;background:#a0a0a0"></div>
<div style="position:absolute;left:380px;top:611px;width:1px;height:22px;background:#fff"></div>
<div style="position:absolute;left:483px;top:611px;width:1px;height:22px;background:#a0a0a0"></div>
<div style="position:absolute;left:484px;top:611px;width:1px;height:22px;background:#fff"></div>
<div style="position:absolute;left:598px;top:611px;width:1px;height:22px;background:#a0a0a0"></div>
<div style="position:absolute;left:599px;top:611px;width:1px;height:22px;background:#fff"></div>
<div style="position:absolute;left:662px;top:611px;width:1px;height:22px;background:#a0a0a0"></div>
<div style="position:absolute;left:663px;top:611px;width:1px;height:22px;background:#fff"></div>
<div style="position:absolute;left:678px;top:613.0px;height:16px;line-height:16px;font:normal 13.3px 'Liberation Sans',sans-serif;color:#000;white-space:pre;">Tim</div>
<div style="position:absolute;left:699px;top:612px;width:21px;height:21px;box-sizing:border-box;border-top:1px solid #fff;border-left:1px solid #fff;border-right:2px solid #a0a0a0;border-bottom:2px solid #a0a0a0;background:#f0f0f0"></div>
<div style="position:absolute;left:719px;top:612px;width:21px;height:21px;box-sizing:border-box;border-top:1px solid #fff;border-left:1px solid #fff;border-right:2px solid #a0a0a0;border-bottom:2px solid #a0a0a0;background:#f0f0f0"></div>
<div style="position:absolute;left:705px;top:618px;width:0;height:0;border-top:5px solid transparent;border-bottom:5px solid transparent;border-right:5px solid #000"></div>
<div style="position:absolute;left:727px;top:618px;width:0;height:0;border-top:5px solid transparent;border-bottom:5px solid transparent;border-left:5px solid #000"></div>
<div style="position:absolute;left:14px;top:641px;width:80px;height:16px;background:#bccbb5"></div>
<div style="position:absolute;left:-96.0px;width:300px;text-align:center;top:641.5px;height:16px;line-height:16px;font:normal 13px 'Liberation Sans',sans-serif;color:#000;white-space:pre;text-decoration:underline">VFilter/cycle</div>
<div style="position:absolute;left:30.4px;top:660.4px;width:34px;height:34px;border-radius:50%;background:#bfcdb6;box-shadow:0 0 0 1px #f6f6f6, 2px 2px 0 1px #a4a4a4"></div>
<div style="position:absolute;left:45.4px;top:681.4px;width:10px;height:10px;border-radius:50%;background:#808080"></div>
<div style="position:absolute;left:74px;top:662.5px;height:16px;line-height:16px;font:normal 13px 'Liberation Sans',sans-serif;color:#000;white-space:pre;">16</div>
<div style="position:absolute;left:116px;top:649.5px;height:16px;line-height:16px;font:normal 13px 'Liberation Sans',sans-serif;color:#000;white-space:pre;">VFilter Type</div>
<div style="position:absolute;left:116px;top:669px;width:95px;height:24px;box-sizing:border-box;border-top:2px solid #808080;border-left:2px solid #808080;border-bottom:1px solid #fff;border-right:1px solid #fff;background:#fff"></div>
<div style="position:absolute;left:120px;top:674.0px;height:17px;line-height:17px;font:normal 13.8px 'Liberation Sans',sans-serif;color:#000;white-space:pre;">Average</div>
<div style="position:absolute;left:188px;top:671px;width:22px;height:21px;box-sizing:border-box;border-top:1px solid #fff;border-left:1px solid #fff;border-right:2px solid #808080;border-bottom:2px solid #808080;background:#f0f0f0"></div>
<div style="position:absolute;left:194px;top:679.0px;width:0;height:0;border-left:5px solid transparent;border-right:5px solid transparent;border-top:5px solid #000"></div>
<div style="position:absolute;left:87px;width:300px;text-align:center;top:649.5px;height:16px;line-height:16px;font:normal 13px 'Liberation Sans',sans-serif;color:#000;white-space:pre;">LO F</div>
<div style="position:absolute;left:227px;top:670px;width:21px;height:20px;background:#5e0b0f"></div>
<div style="position:absolute;left:137px;width:300px;text-align:center;top:649.5px;height:16px;line-height:16px;font:normal 13px 'Liberation Sans',sans-serif;color:#000;white-space:pre;">E F</div>
<div style="position:absolute;left:277px;top:670px;width:21px;height:20px;background:#5e0b0f"></div>
<div style="position:absolute;left:186px;width:300px;text-align:center;top:649.5px;height:16px;line-height:16px;font:normal 13px 'Liberation Sans',sans-serif;color:#000;white-space:pre;">MinHold</div>
<div style="position:absolute;left:327px;top:670px;width:21px;height:20px;background:#5e0b0f"></div>
<div style="position:absolute;left:243px;width:300px;text-align:center;top:649.5px;height:16px;line-height:16px;font:normal 13px 'Liberation Sans',sans-serif;color:#000;white-space:pre;">MaxHold</div>
<div style="position:absolute;left:377px;top:670px;width:21px;height:20px;background:#5e0b0f"></div>
<div style="position:absolute;left:288px;width:300px;text-align:center;top:649.5px;height:16px;line-height:16px;font:normal 13px 'Liberation Sans',sans-serif;color:#000;white-space:pre;">PM</div>
<div style="position:absolute;left:427px;top:670px;width:21px;height:20px;background:#5e0b0f"></div>
<div style="position:absolute;left:338px;width:300px;text-align:center;top:649.5px;height:16px;line-height:16px;font:normal 13px 'Liberation Sans',sans-serif;color:#000;white-space:pre;">RWindow</div>
<div style="position:absolute;left:477px;top:670px;width:21px;height:20px;background:#5e0b0f"></div>
<div style="position:absolute;left:414px;width:300px;text-align:center;top:649.5px;height:16px;line-height:16px;font:normal 13px 'Liberation Sans',sans-serif;color:#000;white-space:pre;">Fast-Cycle</div>
<div style="position:absolute;left:550px;top:668px;width:26px;height:24px;border-top:1px solid #a0a0a0;border-left:1px solid #a0a0a0;border-bottom:1px solid #fff;border-right:1px solid #fff;background:#fff"></div>
<div style="position:absolute;left:553px;top:671px;width:22px;height:20px;background:#ee1c24"></div>
<div style="position:absolute;left:502px;width:300px;text-align:center;top:642.5px;height:16px;line-height:16px;font:normal 13px 'Liberation Sans',sans-serif;color:#000;white-space:pre;">UpdateTime</div>
<div style="position:absolute;left:633.4px;top:660.4px;width:34px;height:34px;border-radius:50%;background:#bfcdb6;box-shadow:0 0 0 1px #f6f6f6, 2px 2px 0 1px #a4a4a4"></div>
<div style="position:absolute;left:648.4px;top:681.4px;width:10px;height:10px;border-radius:50%;background:#808080"></div>
<div style="position:absolute;left:674px;top:662.5px;height:16px;line-height:16px;font:normal 13px 'Liberation Sans',sans-serif;color:#000;white-space:pre;">15ms</div>
<div style="position:absolute;left:3px;top:709px;width:741px;height:76px;box-sizing:border-box;border-top:1px solid #fff;border-left:1px solid #fff;border-right:2px solid #a8a8a8;border-bottom:2px solid #a8a8a8"></div>
<div style="position:absolute;left:4px;top:710px;width:738px;height:73px;box-sizing:border-box;border-top:2px solid #808080;border-left:2px solid #808080;border-right:1px solid #fff;border-bottom:1px solid #fff"></div>
<div style="position:absolute;left:6px;top:712px;width:735px;height:70px;box-sizing:border-box;border-top:1px solid #fff;border-left:1px solid #fff;border-right:0;border-bottom:0"></div>
<div style="position:absolute;left:7px;top:713px;width:733px;height:68px;box-sizing:border-box;border-top:1px solid #a0a0a0;border-left:1px solid #a0a0a0;border-right:1px solid #fff;border-bottom:1px solid #fff"></div>
<div style="position:absolute;left:-99px;width:300px;text-align:center;top:721.5px;height:16px;line-height:16px;font:normal 13px 'Liberation Sans',sans-serif;color:#000;white-space:pre;">PeakTH</div>
<div style="position:absolute;left:30.4px;top:737.4px;width:34px;height:34px;border-radius:50%;background:#bfcdb6;box-shadow:0 0 0 1px #f6f6f6, 2px 2px 0 1px #a4a4a4"></div>
<div style="position:absolute;left:45.4px;top:758.4px;width:10px;height:10px;border-radius:50%;background:#808080"></div>
<div style="position:absolute;left:-13px;width:300px;text-align:center;top:723.5px;height:16px;line-height:16px;font:normal 13px 'Liberation Sans',sans-serif;color:#000;white-space:pre;">PeakA</div>
<div style="position:absolute;left:126px;top:742px;width:23px;height:23px;box-sizing:border-box;border-top:1px solid #fff;border-left:1px solid #fff;border-right:2px solid #808080;border-bottom:2px solid #808080;background:#f0f0f0"></div>
<div style="position:absolute;left:38px;width:300px;text-align:center;top:723.5px;height:16px;line-height:16px;font:normal 13px 'Liberation Sans',sans-serif;color:#000;white-space:pre;">PeakH</div>
<div style="position:absolute;left:177px;top:742px;width:23px;height:23px;box-sizing:border-box;border-top:1px solid #fff;border-left:1px solid #fff;border-right:2px solid #808080;border-bottom:2px solid #808080;background:#f0f0f0"></div>
<div style="position:absolute;left:87px;width:300px;text-align:center;top:723.5px;height:16px;line-height:16px;font:normal 13px 'Liberation Sans',sans-serif;color:#000;white-space:pre;">Tracker</div>
<div style="position:absolute;left:226px;top:742px;width:23px;height:23px;box-sizing:border-box;border-top:1px solid #fff;border-left:1px solid #fff;border-right:2px solid #808080;border-bottom:2px solid #808080;background:#f0f0f0"></div>
<div style="position:absolute;left:137px;width:300px;text-align:center;top:723.5px;height:16px;line-height:16px;font:normal 13px 'Liberation Sans',sans-serif;color:#000;white-space:pre;">CF</div>
<div style="position:absolute;left:276px;top:742px;width:23px;height:23px;box-sizing:border-box;border-top:1px solid #fff;border-left:1px solid #fff;border-right:2px solid #808080;border-bottom:2px solid #808080;background:#f0f0f0"></div>
<div style="position:absolute;left:187px;width:300px;text-align:center;top:723.5px;height:16px;line-height:16px;font:normal 13px 'Liberation Sans',sans-serif;color:#000;white-space:pre;">Prev</div>
<div style="position:absolute;left:326px;top:742px;width:23px;height:23px;box-sizing:border-box;border-top:1px solid #fff;border-left:1px solid #fff;border-right:2px solid #808080;border-bottom:2px solid #808080;background:#f0f0f0"></div>
<div style="position:absolute;left:237px;width:300px;text-align:center;top:723.5px;height:16px;line-height:16px;font:normal 13px 'Liberation Sans',sans-serif;color:#000;white-space:pre;">Next</div>
<div style="position:absolute;left:376px;top:742px;width:23px;height:23px;box-sizing:border-box;border-top:1px solid #fff;border-left:1px solid #fff;border-right:2px solid #808080;border-bottom:2px solid #808080;background:#f0f0f0"></div>
<div style="position:absolute;left:286px;width:300px;text-align:center;top:723.5px;height:16px;line-height:16px;font:normal 13px 'Liberation Sans',sans-serif;color:#000;white-space:pre;">Del</div>
<div style="position:absolute;left:425px;top:742px;width:23px;height:23px;box-sizing:border-box;border-top:1px solid #fff;border-left:1px solid #fff;border-right:2px solid #808080;border-bottom:2px solid #808080;background:#f0f0f0"></div>
<div style="position:absolute;left:337px;width:300px;text-align:center;top:723.5px;height:16px;line-height:16px;font:normal 13px 'Liberation Sans',sans-serif;color:#000;white-space:pre;">Set</div>
<div style="position:absolute;left:476px;top:742px;width:23px;height:23px;box-sizing:border-box;border-top:1px solid #fff;border-left:1px solid #fff;border-right:2px solid #808080;border-bottom:2px solid #808080;background:#f0f0f0"></div>
<div style="position:absolute;left:395px;width:300px;text-align:center;top:723.5px;height:16px;line-height:16px;font:normal 13px 'Liberation Sans',sans-serif;color:#000;white-space:pre;">MKR Unit</div>
<div style="position:absolute;left:516px;top:744px;width:57px;height:22px;box-sizing:border-box;border-top:2px solid #808080;border-left:2px solid #808080;border-bottom:1px solid #fff;border-right:1px solid #fff;background:#fff"></div>
<div style="position:absolute;left:520px;top:748.0px;height:17px;line-height:17px;font:normal 13.8px 'Liberation Sans',sans-serif;color:#000;white-space:pre;">kHz</div>
<div style="position:absolute;left:550px;top:746px;width:22px;height:19px;box-sizing:border-box;border-top:1px solid #fff;border-left:1px solid #fff;border-right:2px solid #808080;border-bottom:2px solid #808080;background:#f0f0f0"></div>
<div style="position:absolute;left:556px;top:753.0px;width:0;height:0;border-left:5px solid transparent;border-right:5px solid transparent;border-top:5px solid #000"></div>
<div style="position:absolute;left:450px;width:300px;text-align:center;top:723.5px;height:16px;line-height:16px;font:normal 13px 'Liberation Sans',sans-serif;color:#000;white-space:pre;">All Info</div>
<div style="position:absolute;left:590px;top:745px;width:21px;height:19px;background:#5e0b0f"></div>
<div style="position:absolute;left:501px;width:300px;text-align:center;top:723.5px;height:16px;line-height:16px;font:normal 13px 'Liberation Sans',sans-serif;color:#000;white-space:pre;">Cursors</div>
<div style="position:absolute;left:642px;top:745px;width:21px;height:19px;background:#5e0b0f"></div>
<div style="position:absolute;left:552px;width:300px;text-align:center;top:723.5px;height:16px;line-height:16px;font:normal 13px 'Liberation Sans',sans-serif;color:#000;white-space:pre;">CP/PSD</div>
<div style="position:absolute;left:692px;top:745px;width:21px;height:19px;background:#5e0b0f"></div>
<div style="position:absolute;left:733px;top:717.0px;height:15px;line-height:15px;font:normal 12.5px 'Liberation Serif',sans-serif;color:#000;white-space:pre;color:#303048">X</div>
<div style="position:absolute;left:3px;top:787px;width:741px;height:76px;box-sizing:border-box;border-top:1px solid #fff;border-left:1px solid #fff;border-right:2px solid #a8a8a8;border-bottom:2px solid #a8a8a8"></div>
<div style="position:absolute;left:4px;top:788px;width:738px;height:73px;box-sizing:border-box;border-top:2px solid #808080;border-left:2px solid #808080;border-right:1px solid #fff;border-bottom:1px solid #fff"></div>
<div style="position:absolute;left:6px;top:790px;width:735px;height:70px;box-sizing:border-box;border-top:1px solid #fff;border-left:1px solid #fff;border-right:0;border-bottom:0"></div>
<div style="position:absolute;left:7px;top:791px;width:733px;height:68px;box-sizing:border-box;border-top:1px solid #a0a0a0;border-left:1px solid #a0a0a0;border-right:1px solid #fff;border-bottom:1px solid #fff"></div>
<div style="position:absolute;left:26px;top:796px;width:47px;height:15px;background:#bccbb5"></div>
<div style="position:absolute;left:-100.5px;width:300px;text-align:center;top:795.0px;height:18px;line-height:18px;font:bold 14.6px 'Liberation Sans',sans-serif;color:#000;white-space:pre;text-decoration:underline">Power</div>
<div style="position:absolute;left:28px;top:813px;width:42px;height:40px;box-sizing:border-box;border-top:2px solid #b4b4b4;border-left:2px solid #b4b4b4;border-bottom:1px solid #fff;border-right:1px solid #fff;background:#f8f8f8"></div>
<div style="position:absolute;left:35px;top:818px;width:31px;height:30px;background:#00d000"></div>
<div style="position:absolute;left:-59px;width:300px;text-align:center;top:808.5px;height:16px;line-height:16px;font:normal 13px 'Liberation Sans',sans-serif;color:#000;white-space:pre;">°C</div>
<div style="position:absolute;left:85px;top:827px;width:11px;height:11px;border-radius:40%;background:#007800;border:1.5px solid #101010"></div>
<div style="position:absolute;left:106px;top:796px;width:61px;height:15px;background:#bccbb5"></div>
<div style="position:absolute;left:-13.5px;width:300px;text-align:center;top:796.0px;height:16px;line-height:16px;font:normal 13px 'Liberation Sans',sans-serif;color:#000;white-space:pre;text-decoration:underline">dB/div</div>
<div style="position:absolute;left:114.4px;top:814.4px;width:34px;height:34px;border-radius:50%;background:#bfcdb6;box-shadow:0 0 0 1px #f6f6f6, 2px 2px 0 1px #a4a4a4"></div>
<div style="position:absolute;left:114.4px;top:826.4px;width:8px;height:8px;border-radius:50%;background:#808080"></div>
<div style="position:absolute;left:160px;top:818.5px;height:16px;line-height:16px;font:normal 13px 'Liberation Sans',sans-serif;color:#000;white-space:pre;">0.5</div>
<div style="position:absolute;left:160px;top:835.0px;height:16px;line-height:16px;font:normal 13px 'Liberation Sans',sans-serif;color:#000;white-space:pre;">dB</div>
<div style="position:absolute;left:86px;width:300px;text-align:center;top:801.5px;height:16px;line-height:16px;font:normal 13px 'Liberation Sans',sans-serif;color:#000;white-space:pre;">TFinder</div>
<div style="position:absolute;left:226px;top:820px;width:23px;height:23px;box-sizing:border-box;border-top:1px solid #fff;border-left:1px solid #fff;border-right:2px solid #808080;border-bottom:2px solid #808080;background:#f0f0f0"></div>
<div style="position:absolute;left:136px;width:300px;text-align:center;top:801.5px;height:16px;line-height:16px;font:normal 13px 'Liberation Sans',sans-serif;color:#000;white-space:pre;">Hold</div>
<div style="position:absolute;left:277px;top:821px;width:21px;height:20px;background:#5e0b0f"></div>
<div style="position:absolute;left:312px;top:799px;width:246px;height:55px;box-sizing:border-box;border:1px solid #a0a0a0;box-shadow:1px 1px 0 #fff, inset 1px 1px 0 #fff"></div>
<div style="position:absolute;left:520px;top:796px;width:30px;height:10px;background:#f0f0f0"></div>
<div style="position:absolute;left:385px;width:300px;text-align:center;top:792.5px;height:16px;line-height:16px;font:normal 13.2px 'Liberation Sans',sans-serif;color:#000;white-space:pre;">TSA</div>
<div style="position:absolute;left:186px;width:300px;text-align:center;top:801.5px;height:16px;line-height:16px;font:normal 13px 'Liberation Sans',sans-serif;color:#000;white-space:pre;">Copy</div>
<div style="position:absolute;left:326px;top:820px;width:23px;height:23px;box-sizing:border-box;border-top:1px solid #fff;border-left:1px solid #fff;border-right:2px solid #808080;border-bottom:2px solid #808080;background:#f0f0f0"></div>
<div style="position:absolute;left:238px;width:300px;text-align:center;top:801.5px;height:16px;line-height:16px;font:normal 13px 'Liberation Sans',sans-serif;color:#000;white-space:pre;">L/C</div>
<div style="position:absolute;left:378px;top:821px;width:21px;height:20px;background:#808080"></div>
<div style="position:absolute;left:421px;top:800.5px;height:16px;line-height:16px;font:normal 13px 'Liberation Sans',sans-serif;color:#000;white-space:pre;">Display Format</div>
<div style="position:absolute;left:424px;top:821px;width:119px;height:23px;box-sizing:border-box;border-top:2px solid #808080;border-left:2px solid #808080;border-bottom:1px solid #fff;border-right:1px solid #fff;background:#fff"></div>
<div style="position:absolute;left:428px;top:825.5px;height:17px;line-height:17px;font:normal 13.8px 'Liberation Sans',sans-serif;color:#000;white-space:pre;">Logmag</div>
<div style="position:absolute;left:520px;top:823px;width:22px;height:20px;box-sizing:border-box;border-top:1px solid #fff;border-left:1px solid #fff;border-right:2px solid #808080;border-bottom:2px solid #808080;background:#f0f0f0"></div>
<div style="position:absolute;left:526px;top:830.5px;width:0;height:0;border-left:5px solid transparent;border-right:5px solid transparent;border-top:5px solid #000"></div>
<div style="position:absolute;left:446px;width:300px;text-align:center;top:803.5px;height:16px;line-height:16px;font:normal 13px 'Liberation Sans',sans-serif;color:#000;white-space:pre;">Legend</div>
<div style="position:absolute;left:587px;top:823px;width:23px;height:22px;box-sizing:border-box;border-top:1px solid #fff;border-left:1px solid #fff;border-right:2px solid #808080;border-bottom:2px solid #808080;background:#f0f0f0"></div>
<div style="position:absolute;left:499px;width:300px;text-align:center;top:803.5px;height:16px;line-height:16px;font:normal 13px 'Liberation Sans',sans-serif;color:#000;white-space:pre;">Panels</div>
<div style="position:absolute;left:640px;top:823px;width:21px;height:22px;box-sizing:border-box;border-top:2px solid #a0a0a0;border-left:2px solid #a0a0a0;border-bottom:1px solid #fff;border-right:1px solid #fff;background:#f6f6f6"></div>
<div style="position:absolute;left:550px;width:300px;text-align:center;top:803.5px;height:16px;line-height:16px;font:normal 13px 'Liberation Sans',sans-serif;color:#000;white-space:pre;">ToolBar</div>
<div style="position:absolute;left:690px;top:823px;width:21px;height:22px;box-sizing:border-box;border-top:2px solid #a0a0a0;border-left:2px solid #a0a0a0;border-bottom:1px solid #fff;border-right:1px solid #fff;background:#f6f6f6"></div>
<div style="position:absolute;left:732px;top:792px;width:9px;height:67px;background:#ababab"></div>
<div style="position:absolute;left:733px;top:818.0px;height:17px;line-height:17px;font:normal 14px 'Liberation Sans',sans-serif;color:#000;white-space:pre;color:#202040">&gt;</div>
<div style="position:absolute;left:1px;top:866px;width:1270px;height:1px;background:#b0b0b0"></div>
<div style="position:absolute;left:1px;top:868px;width:1270px;height:1px;background:#fff"></div>
<div style="position:absolute;left:1px;top:869px;width:1270px;height:1px;background:#a8a8a8"></div>
<div style="position:absolute;left:21px;top:877px;width:75px;height:51px;box-sizing:border-box;border-top:1px solid #fff;border-left:1px solid #fff;border-right:2px solid #808080;border-bottom:2px solid #808080;background:#f0f0f0"></div>
<div style="position:absolute;left:-92px;width:300px;text-align:center;top:888.5px;height:16px;line-height:16px;font:normal 13.6px 'Liberation Sans',sans-serif;color:#000;white-space:pre;">Edit SA</div>
<div style="position:absolute;left:-92px;width:300px;text-align:center;top:904.5px;height:16px;line-height:16px;font:normal 13.6px 'Liberation Sans',sans-serif;color:#000;white-space:pre;">markers</div>
<div style="position:absolute;left:104px;top:877px;width:75px;height:51px;box-sizing:border-box;border-top:1px solid #fff;border-left:1px solid #fff;border-right:2px solid #808080;border-bottom:2px solid #808080;background:#f0f0f0"></div>
<div style="position:absolute;left:-9px;width:300px;text-align:center;top:888.5px;height:16px;line-height:16px;font:normal 13.6px 'Liberation Sans',sans-serif;color:#000;white-space:pre;">Edit TSA</div>
<div style="position:absolute;left:-9px;width:300px;text-align:center;top:904.5px;height:16px;line-height:16px;font:normal 13.6px 'Liberation Sans',sans-serif;color:#000;white-space:pre;">markers</div>
<div style="position:absolute;left:186px;top:877px;width:75px;height:51px;box-sizing:border-box;border-top:1px solid #fff;border-left:1px solid #fff;border-right:2px solid #808080;border-bottom:2px solid #808080;background:#f0f0f0"></div>
<div style="position:absolute;left:73px;width:300px;text-align:center;top:888.5px;height:16px;line-height:16px;font:normal 13.6px 'Liberation Sans',sans-serif;color:#000;white-space:pre;">TSA/SWE</div>
<div style="position:absolute;left:73px;width:300px;text-align:center;top:904.5px;height:16px;line-height:16px;font:normal 13.6px 'Liberation Sans',sans-serif;color:#000;white-space:pre;">1st</div>
<div style="position:absolute;left:268px;top:877px;width:75px;height:51px;box-sizing:border-box;border-top:1px solid #fff;border-left:1px solid #fff;border-right:2px solid #808080;border-bottom:2px solid #808080;background:#f0f0f0"></div>
<div style="position:absolute;left:155px;width:300px;text-align:center;top:888.5px;height:16px;line-height:16px;font:normal 13.6px 'Liberation Sans',sans-serif;color:#000;white-space:pre;">TSA/SWE</div>
<div style="position:absolute;left:155px;width:300px;text-align:center;top:904.5px;height:16px;line-height:16px;font:normal 13.6px 'Liberation Sans',sans-serif;color:#000;white-space:pre;">3rd</div>
<div style="position:absolute;left:351px;top:877px;width:75px;height:51px;box-sizing:border-box;border-top:1px solid #fff;border-left:1px solid #fff;border-right:2px solid #808080;border-bottom:2px solid #808080;background:#f0f0f0"></div>
<div style="position:absolute;left:238px;width:300px;text-align:center;top:888.5px;height:16px;line-height:16px;font:normal 13.6px 'Liberation Sans',sans-serif;color:#000;white-space:pre;">TSA/SWE</div>
<div style="position:absolute;left:238px;width:300px;text-align:center;top:904.5px;height:16px;line-height:16px;font:normal 13.6px 'Liberation Sans',sans-serif;color:#000;white-space:pre;">5th</div>
<div style="position:absolute;left:434px;top:877px;width:75px;height:51px;box-sizing:border-box;border-top:1px solid #fff;border-left:1px solid #fff;border-right:2px solid #808080;border-bottom:2px solid #808080;background:#f0f0f0"></div>
<div style="position:absolute;left:321px;width:300px;text-align:center;top:888.5px;height:16px;line-height:16px;font:normal 13.6px 'Liberation Sans',sans-serif;color:#000;white-space:pre;">TSA</div>
<div style="position:absolute;left:321px;width:300px;text-align:center;top:904.5px;height:16px;line-height:16px;font:normal 13.6px 'Liberation Sans',sans-serif;color:#000;white-space:pre;">RXOffset</div>
<div style="position:absolute;left:516px;top:877px;width:75px;height:51px;box-sizing:border-box;border-top:1px solid #fff;border-left:1px solid #fff;border-right:2px solid #808080;border-bottom:2px solid #808080;background:#f0f0f0"></div>
<div style="position:absolute;left:403px;width:300px;text-align:center;top:888.5px;height:16px;line-height:16px;font:normal 13.6px 'Liberation Sans',sans-serif;color:#000;white-space:pre;">TSA</div>
<div style="position:absolute;left:403px;width:300px;text-align:center;top:904.5px;height:16px;line-height:16px;font:normal 13.6px 'Liberation Sans',sans-serif;color:#000;white-space:pre;">TXOffset</div>
<div style="position:absolute;left:598px;top:877px;width:75px;height:51px;box-sizing:border-box;border-top:1px solid #fff;border-left:1px solid #fff;border-right:2px solid #808080;border-bottom:2px solid #808080;background:#f0f0f0"></div>
<div style="position:absolute;left:485px;width:300px;text-align:center;top:888.5px;height:16px;line-height:16px;font:normal 13.6px 'Liberation Sans',sans-serif;color:#000;white-space:pre;">TSA</div>
<div style="position:absolute;left:485px;width:300px;text-align:center;top:904.5px;height:16px;line-height:16px;font:normal 13.6px 'Liberation Sans',sans-serif;color:#000;white-space:pre;">Multipl.</div>
<div style="position:absolute;left:681px;top:877px;width:75px;height:51px;box-sizing:border-box;border-top:1px solid #fff;border-left:1px solid #fff;border-right:2px solid #808080;border-bottom:2px solid #808080;background:#f0f0f0"></div>
<div style="position:absolute;left:568px;width:300px;text-align:center;top:888.5px;height:16px;line-height:16px;font:normal 13.6px 'Liberation Sans',sans-serif;color:#000;white-space:pre;">Open</div>
<div style="position:absolute;left:568px;width:300px;text-align:center;top:904.5px;height:16px;line-height:16px;font:normal 13.6px 'Liberation Sans',sans-serif;color:#000;white-space:pre;">TSA scan</div>
<div style="position:absolute;left:764px;top:877px;width:75px;height:51px;box-sizing:border-box;border-top:1px solid #fff;border-left:1px solid #fff;border-right:2px solid #808080;border-bottom:2px solid #808080;background:#f0f0f0"></div>
<div style="position:absolute;left:651px;width:300px;text-align:center;top:888.5px;height:16px;line-height:16px;font:normal 13.6px 'Liberation Sans',sans-serif;color:#000;white-space:pre;">Save</div>
<div style="position:absolute;left:651px;width:300px;text-align:center;top:904.5px;height:16px;line-height:16px;font:normal 13.6px 'Liberation Sans',sans-serif;color:#000;white-space:pre;">TSA scan</div>
<div style="position:absolute;left:846px;top:877px;width:75px;height:51px;box-sizing:border-box;border-top:1px solid #fff;border-left:1px solid #fff;border-right:2px solid #808080;border-bottom:2px solid #808080;background:#f0f0f0"></div>
<div style="position:absolute;left:733px;width:300px;text-align:center;top:888.5px;height:16px;line-height:16px;font:normal 13.6px 'Liberation Sans',sans-serif;color:#000;white-space:pre;">Save</div>
<div style="position:absolute;left:733px;width:300px;text-align:center;top:904.5px;height:16px;line-height:16px;font:normal 13.6px 'Liberation Sans',sans-serif;color:#000;white-space:pre;">JPG/BMP</div>
<div style="position:absolute;left:928px;top:877px;width:75px;height:51px;box-sizing:border-box;border-top:1px solid #fff;border-left:1px solid #fff;border-right:2px solid #808080;border-bottom:2px solid #808080;background:#f0f0f0"></div>
<div style="position:absolute;left:815px;width:300px;text-align:center;top:895.5px;height:16px;line-height:16px;font:normal 13.6px 'Liberation Sans',sans-serif;color:#000;white-space:pre;">Trace Log</div>
<div style="position:absolute;left:1011px;top:877px;width:75px;height:51px;box-sizing:border-box;border-top:1px solid #fff;border-left:1px solid #fff;border-right:2px solid #808080;border-bottom:2px solid #808080;background:#f0f0f0"></div>
<div style="position:absolute;left:898px;width:300px;text-align:center;top:895.5px;height:16px;line-height:16px;font:normal 13.6px 'Liberation Sans',sans-serif;color:#000;white-space:pre;">Settings</div>
<div style="position:absolute;left:1102px;top:877px;width:75px;height:51px;box-sizing:border-box;border-top:1px solid #fff;border-left:1px solid #fff;border-right:2px solid #808080;border-bottom:2px solid #808080;background:#f0f0f0"></div>
<div style="position:absolute;left:989px;width:300px;text-align:center;top:895.5px;height:16px;line-height:16px;font:normal 13.6px 'Liberation Sans',sans-serif;color:#000;white-space:pre;">About</div>
<div style="position:absolute;left:1184px;top:877px;width:75px;height:51px;box-sizing:border-box;border-top:1px solid #fff;border-left:1px solid #fff;border-right:2px solid #808080;border-bottom:2px solid #808080;background:#f0f0f0"></div>
<div style="position:absolute;left:1071px;width:300px;text-align:center;top:895.5px;height:16px;line-height:16px;font:normal 13.6px 'Liberation Sans',sans-serif;color:#000;white-space:pre;">Next&gt;&gt;&gt;</div>
<div style="position:absolute;left:0px;top:0px;width:926px;height:1px;background:#b4b4b4"></div>
<div style="position:absolute;left:926px;top:0;width:346px;height:1px;background:#1d4f7e"></div>
<div style="position:absolute;left:1270px;top:1px;width:1px;height:932px;background:#c8c8c8"></div>
<div style="position:absolute;left:0px;top:866px;width:1px;height:70px;background:#1d5a8e"></div></div></body></html>
